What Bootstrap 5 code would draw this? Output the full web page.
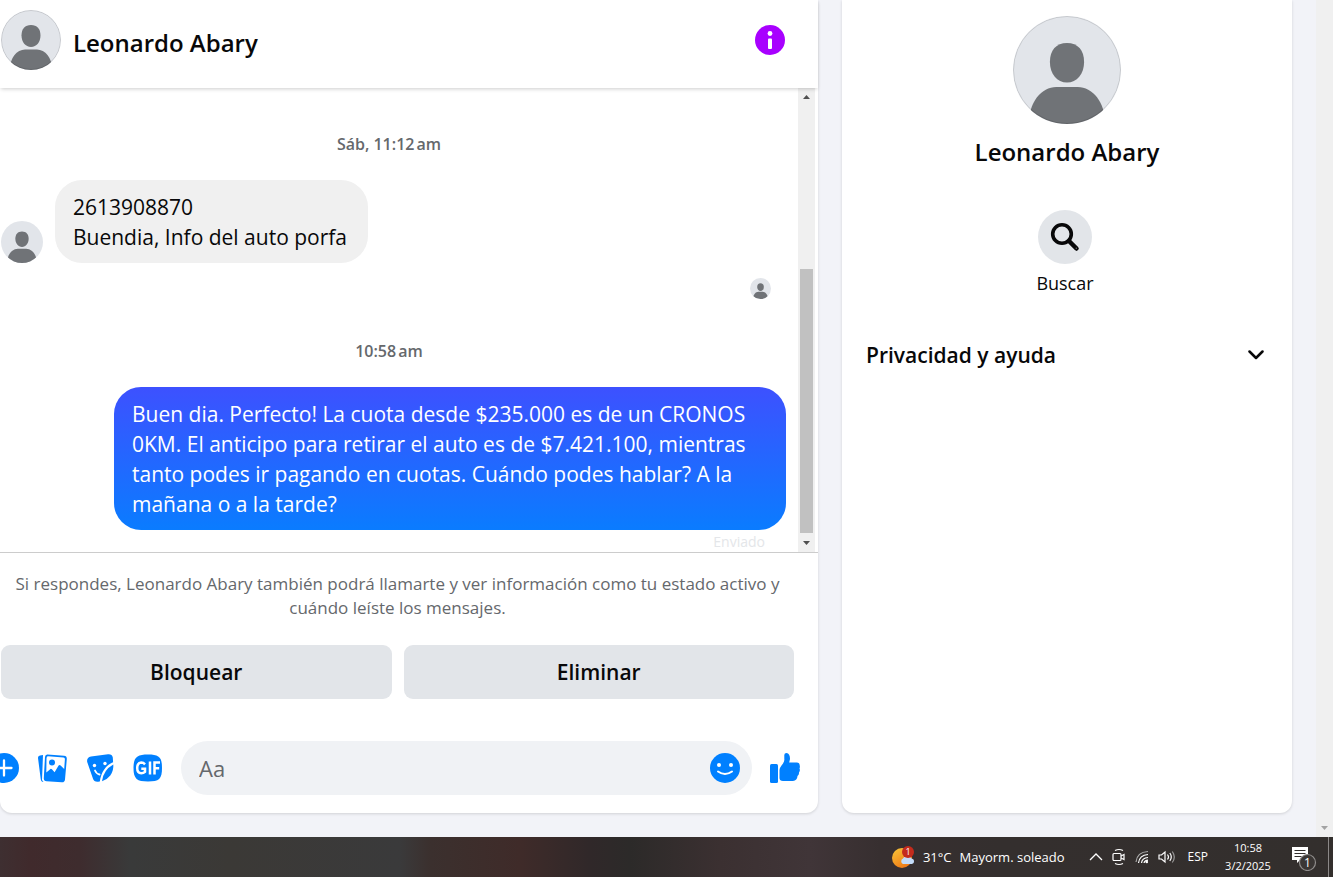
<!DOCTYPE html>
<html lang="es">
<head>
<meta charset="utf-8">
<meta name="viewport" content="width=device-width, initial-scale=1">
<title>Leonardo Abary</title>
<link href="https://cdn.jsdelivr.net/npm/bootstrap@5.3.0/dist/css/bootstrap.min.css" rel="stylesheet">
<script src="https://cdn.jsdelivr.net/npm/bootstrap@5.3.0/dist/js/bootstrap.bundle.min.js" defer></script>
<style>
  body { font-family: "Open Sans", "Noto Sans", sans-serif; color: #080809; background: #f2f3f8; }
  .fit-y { min-height: 0; }
  .panel { background: #fff; box-shadow: 0 1px 3px rgba(0,0,0,.14); border-radius: 0 0 12px 12px; }
  .chat { min-width: 0; }
  .side { flex: 0 0 450px; padding: 16px 24px 0; }
  .pane-name { font-size: 24px; line-height: 32px; font-weight: 600; }
  .chat-head { height: 88px; padding: 0 33px 8px 1px; box-shadow: 0 2px 4px -1px rgba(0,0,0,.2); z-index: 1; }
  .chat-head .pane-name { padding: 6px 0 0 12px; }
  .icon-btn { border: 0; background: none; padding: 0; width: 30px; height: 30px; display: block; flex: none; color: inherit; }
  .icon-btn svg { display: block; width: 100%; height: 100%; }
  .av { border-radius: 50%; overflow: hidden; flex: none; position: relative; }
  .av svg { display: block; width: 100%; height: 100%; }
  .av-ring::after { content: ""; position: absolute; inset: 0; border-radius: 50%; border: 1px solid rgba(0,0,0,.12); }
  .av-21 { width: 21px; height: 21px; }
  .av-42 { width: 42px; height: 42px; }
  .av-60 { width: 60px; height: 60px; }
  .av-108 { width: 108px; height: 108px; }
  .thread { padding-right: 12px; }
  .incoming { gap: 12px; padding-left: 1px; }
  .stamp { font-size: 16px; line-height: 20px; font-weight: 600; color: #65686c; text-align: center; padding-right: 8px; margin-bottom: 26px; }
  .bubble { font-size: 21px; line-height: 30px; padding: 12px 18px 11px; border-radius: 27px; }
  .bubble-in { background: #f0f0f0; padding-right: 21px; }
  .bubble-out { color: #fff; max-width: 672px; background: linear-gradient(#3d51ff, #0a7cff); }
  .seen-row { margin: 15px 15px 42px 0; }
  .sent { font-size: 14px; line-height: 20px; color: #e4e6e9; padding: 2px 21px 0 0; }
  .track { width: 17px; background: #f0f0f0; flex: none; }
  .chat-track { margin-right: 3px; }
  .thumb { width: 13px; flex: 0 1 264px; background: #c1c1c1; }
  .chat-foot { border-top: 1px solid #ccc; padding-top: 19px; }
  .notice { font-size: 17px; line-height: 24px; color: #65686c; margin-bottom: 25px; padding: 0 24px 0 1px; text-align: center; }
  .choices { padding: 0 24px 0 1px; gap: 12px; margin-bottom: 42px; }
  .choices .btn { background: #e2e5e9; height: 54px; border-radius: 9px; font-size: 21px; line-height: 30px; padding: 12px 0; font-weight: 600; border: 0; color: #080809; }
  .composer { gap: 18px; padding: 0 18px 18px 0; margin-left: -11px; color: #0080ff; }
  .entry { background: #f0f2f5; border-radius: 27px; height: 54px; padding: 0 12px 0 18px; }
  .entry input { border: 0; background: none; font-size: 22px; outline: 0; min-width: 0; height: 54px; }
  .entry input::placeholder { color: #65686c; }
  .search-slot { margin: 42px 4px 45px 0; }
  .round-btn { width: 54px; height: 54px; background: #e2e5e9; border-radius: 50%; padding: 12px; }
  .round-label { font-size: 18px; line-height: 24px; margin-top: 7px; }
  .fold { border: 0; background: none; padding: 0 4px 0 0; font-size: 21px; line-height: 30px; font-weight: 600; color: #080809; }
  .taskbar { height: 40px; color: #fff; font-size: 13px; line-height: 18px; padding-right: 4px;
    background: linear-gradient(90deg, #3e2f31 0, #402a2c 30px, #3e2c2e 80px, #393a3a 130px, #3b3936 230px, #3a3a3b 400px, #3b302e 430px, #3f2b29 520px, #302829 590px, #2c2a29 630px, #3b3031 720px, #403538 810px, #372f30 880px, #342f2e 1000px, #332f2d 100%); }
  .taskbar svg { display: block; flex: none; }
  .weather { gap: 8px; margin-right: 24px; }
  .tray { gap: 9px; margin-right: 12px; }
  .lang { font-size: 12px; margin-right: 15px; }
  .clock { font-size: 11px; width: 50px; margin-right: 18px; }
  .peek { border-left: 1px solid #8c8988; margin-left: 11px; }
</style>
</head>
<body class="vh-100 d-flex flex-column overflow-hidden">
<svg class="d-none">
  <symbol id="person" viewBox="0 0 60 60">
    <rect width="60" height="60" fill="#e2e5ea"/>
    <path d="M30 15c6 0 9.500 4 9.500 10.500C39.500 32 35.500 37 30 37s-9.500-5-9.500-11.500C20.500 19 24 15 30 15z" fill="#707377"/>
    <path d="M9 60c-.5-12 7-20.500 15-20.500h12c8 0 15.500 8.500 15 20.500z" fill="#707377"/>
  </symbol>
</svg>

<div class="d-flex flex-grow-1 fit-y">
  <div class="d-flex flex-grow-1 gap-4 pb-4 pe-4">
    <main class="panel chat d-flex flex-column flex-grow-1">
      <header class="chat-head d-flex align-items-center flex-shrink-0">
        <div class="av av-60 av-ring"><svg><use href="#person"/></svg></div>
        <h1 class="pane-name mb-0 flex-grow-1">Leonardo Abary</h1>
        <button class="icon-btn" aria-label="Información">
          <svg viewBox="0 0 30 30"><circle cx="15" cy="15" r="15" fill="#a800ff"/><circle cx="15" cy="8.500" r="2.400" fill="#fff"/><rect x="13" y="13.500" width="4" height="10.500" rx="1" fill="#fff"/></svg>
        </button>
      </header>

      <section class="d-flex flex-grow-1 fit-y">
        <div class="thread d-flex flex-column justify-content-end flex-grow-1 overflow-hidden">
          <div class="stamp">Sáb, 11:12&#8239;am</div>
          <div class="incoming d-flex align-items-end">
            <div class="av av-42"><svg><use href="#person"/></svg></div>
            <div class="bubble bubble-in">2613908870<br>Buendia, Info del auto porfa</div>
          </div>
          <div class="seen-row d-flex justify-content-end"><div class="av av-21"><svg><use href="#person"/></svg></div></div>
          <div class="stamp">10:58&#8239;am</div>
          <div class="d-flex justify-content-end">
            <div class="bubble bubble-out">Buen dia. Perfecto! La cuota desde $235.000 es de un CRONOS 0KM. El anticipo para retirar el auto es de $7.421.100, mientras tanto podes ir pagando en cuotas. Cuándo podes hablar? A la mañana o a la tarde?</div>
          </div>
          <div class="sent text-end">Enviado</div>
        </div>
        <div class="track chat-track d-flex flex-column align-items-center">
          <svg width="17" height="17" viewBox="0 0 17 17"><path d="M5 11h7L8.500 7z" fill="#505050"/></svg>
          <div class="flex-grow-1"></div>
          <div class="thumb"></div>
          <svg width="17" height="19" viewBox="0 0 17 19"><path d="M5 8h7l-3.500 4z" fill="#505050"/></svg>
        </div>
      </section>

      <footer class="chat-foot flex-shrink-0">
        <p class="notice">Si respondes, Leonardo Abary también podrá llamarte y ver información como tu estado activo y cuándo leíste los mensajes.</p>
        <div class="choices d-flex">
          <button class="btn flex-fill w-50">Bloquear</button>
          <button class="btn flex-fill w-50">Eliminar</button>
        </div>
        <form class="composer d-flex align-items-center">
          <button type="button" class="icon-btn" aria-label="Más acciones"><svg viewBox="0 0 30 30"><circle cx="15" cy="15" r="15" fill="currentColor"/><path d="M15 7.500v15M7.500 15h15" stroke="#fff" stroke-width="2.300" stroke-linecap="round"/></svg></button>
          <button type="button" class="icon-btn" aria-label="Adjuntar foto"><svg viewBox="0 0 30 30" fill="currentColor"><path d="M3 2.500 6 2 5 27 6.500 29Q4 29 3.700 26L1 5Q.9 2.900 3 2.500z"/><path d="M10.500 1.500 27 2.700q3 .3 2.800 3.300L28 26.500q-.3 3-3.300 2.800L9.500 28.200q-3-.3-2.700-3.300L8 4q.2-2.700 2.500-2.500z"/><path d="M11 3.300 26.500 4.500q1.500.2 1.400 1.700L27.200 16l-3.600-3.500q-1.200-.9-2 .1l-4 6.700-2.700-3q-1-.9-2 .1L9.300 19.500l.2-14Q9.600 3.200 11 3.300z" fill="#fff"/><circle cx="15" cy="9.500" r="3"/></svg></button>
          <button type="button" class="icon-btn" aria-label="Elegir sticker"><svg viewBox="0 0 30 30"><path d="M6 3.500 23 1.200q4-.4 4.800 3.200l.3 4.800C21 12 16 19 14.800 28.600l-1.800.2q-4 .3-5-3L2.200 9q-.8-4.500 3.800-5.500z" fill="currentColor"/><path d="M28.300 11.500q.5 6-3 11-3 4-8.300 5.700Q18.300 17 28.300 11.500z" fill="currentColor"/><circle cx="9.500" cy="12.500" r="1.700" fill="#fff"/><circle cx="20" cy="10.500" r="1.700" fill="#fff"/><path d="M10 17.500q1.500 3.500 4.500 4" fill="none" stroke="#fff" stroke-width="1.800" stroke-linecap="round"/></svg></button>
          <button type="button" class="icon-btn" aria-label="Elegir GIF"><svg viewBox="0 0 30 30"><path d="M15 1.500c11 0 14 2.500 14 13.500s-3 13.500-14 13.500S.5 26 .5 15 4 1.500 15 1.500z" fill="currentColor"/><g fill="none" stroke="#fff" stroke-width="2.500"><path d="M12 11.300Q10.500 9.600 8.300 9.600 4.200 10 4.200 15t4.100 5.200q2.200 0 3.700-1.400V15.700H8.300"/><path d="M17 8.400v13.200M21.500 21.600V9.600H27M21.500 15.300h4.700"/></g></svg></button>
          <div class="entry d-flex align-items-center flex-grow-1">
            <input class="flex-grow-1 p-0" type="text" placeholder="Aa" aria-label="Mensaje">
            <button type="button" class="icon-btn" aria-label="Elegir emoji"><svg viewBox="0 0 30 30"><circle cx="15" cy="15" r="15" fill="currentColor"/><circle cx="9" cy="12" r="2" fill="#fff"/><circle cx="21" cy="12" r="2" fill="#fff"/><path d="M8 18.500q7 5 14 0" fill="none" stroke="#fff" stroke-width="2" stroke-linecap="round"/></svg></button>
          </div>
          <button type="button" class="icon-btn" aria-label="Me gusta"><svg viewBox="0 0 30 30" fill="currentColor"><rect y="11" width="8" height="19" rx="1.500"/><path d="M14.300 2q0-2 2.200-2 3.500.5 3.500 6l-.8 3.500H27q3 .3 2.700 3 .5 1.500-.2 3 1 2-.5 4 .2 2.500-1.500 3.500-.3 4.700-4.500 5H13q-3.500 0-3.500-3V17q0-2 2-4.500 3.300-4 2.800-6.500z"/></svg></button>
        </form>
      </footer>
    </main>

    <aside class="panel side d-flex flex-column">
      <div class="d-flex flex-column align-items-center">
        <div class="av av-108 av-ring"><svg><use href="#person"/></svg></div>
        <h2 class="pane-name mb-0 mt-2 pt-1">Leonardo Abary</h2>
      </div>
      <div class="search-slot d-flex flex-column align-items-center">
        <button class="icon-btn round-btn" id="buscar"><svg viewBox="0 0 30 30"><circle cx="12" cy="12" r="9.300" fill="none" stroke="#080809" stroke-width="3.600"/><path d="M19 19 26.500 26.500" stroke="#080809" stroke-width="4.500" stroke-linecap="round"/><circle cx="26.300" cy="26.300" r=".7" fill="#777"/></svg></button>
        <label for="buscar" class="round-label">Buscar</label>
      </div>
      <button class="fold d-flex justify-content-between align-items-center">Privacidad y ayuda
        <svg width="16" height="10" viewBox="0 0 16 10"><path d="M1.500 1.500 8 8l6.500-6.500" fill="none" stroke="#080809" stroke-width="2.500" stroke-linecap="round" stroke-linejoin="round"/></svg>
      </button>
    </aside>
  </div>
  <div class="track d-flex align-items-end"><svg width="17" height="17" viewBox="0 0 17 17"><path d="M5 6h7l-3.500 4z" fill="#a3a3a3"/></svg></div>
</div>

<footer class="taskbar d-flex justify-content-end align-items-center flex-shrink-0">
  <div class="weather d-flex align-items-center">
    <svg width="24" height="24" viewBox="0 0 24 24">
      <defs><linearGradient id="sun" x1="0" y1="0" x2=".6" y2="1"><stop stop-color="#f8c83a"/><stop offset="1" stop-color="#ef7a16"/></linearGradient></defs>
      <circle cx="11" cy="13" r="10" fill="url(#sun)"/>
      <path d="M12 19a3 3 0 0 1 0-5.500 5 5 0 0 1 8.500 0 2.800 2.800 0 0 1 .5 5.500z" fill="#c3dbf8"/>
      <circle cx="17" cy="7" r="6" fill="#c42b1c"/>
      <text x="17" y="10" font-size="9" text-anchor="middle" fill="#fff">1</text>
    </svg>
    <span>31°C</span><span>Mayorm. soleado</span>
  </div>
  <div class="tray d-flex align-items-center">
    <svg width="14" height="14" viewBox="0 0 14 14" fill="none" stroke="#fff" stroke-width="1.300"><path d="M1 10 7 4l6 6"/></svg>
    <svg width="14" height="18" viewBox="0 0 14 18" fill="none" stroke="#fff" stroke-width="1.200"><rect x="1" y="5.500" width="8" height="7" rx="1"/><path d="m9 8 3-1.500v5L9 10M3 2.500Q7 .5 11 2.500M3 15.500q4 2 8 0"/></svg>
    <svg width="14" height="16" viewBox="0 0 14 16" fill="none" stroke="#fff" stroke-width="1.200"><path d="M1 13Q2 3 13 2.500" stroke="#aaa"/><path d="M3.500 14Q4.500 6 13 5.500M6.500 14Q7 9 13 8.500M9 14q.5-2.500 4-2.800"/><circle cx="11.800" cy="13" r="1.300" fill="#fff" stroke="none"/></svg>
    <svg width="18" height="16" viewBox="0 0 18 16" fill="none" stroke="#fff" stroke-width="1.200"><path d="M1 6h2.500L7 3v10l-3.500-3H1zM9.500 5.500q2 2.500 0 5M11.800 4q3 4 0 8"/><path d="M14.300 2.500q4 5.500 0 11" stroke="#999"/></svg>
  </div>
  <span class="lang">ESP</span>
  <time class="clock text-center">10:58<br>3/2/2025</time>
  <svg width="26" height="28" viewBox="0 0 26 28">
    <path d="M1 4h16v13h-8l-3 3v-3H1z" fill="#fff"/><path d="M3.500 7.500h11M3.500 10.500h11M3.500 13.500h7" stroke="#332f2d" stroke-width="1.200"/>
    <circle cx="16.500" cy="19.500" r="8" fill="#3a3634" stroke="#8f8c8b" stroke-width="1.200"/>
    <text x="16.500" y="24" font-size="12" text-anchor="middle" fill="#fff">1</text>
  </svg>
  <div class="peek align-self-stretch"></div>
</footer>
</body>
</html>
